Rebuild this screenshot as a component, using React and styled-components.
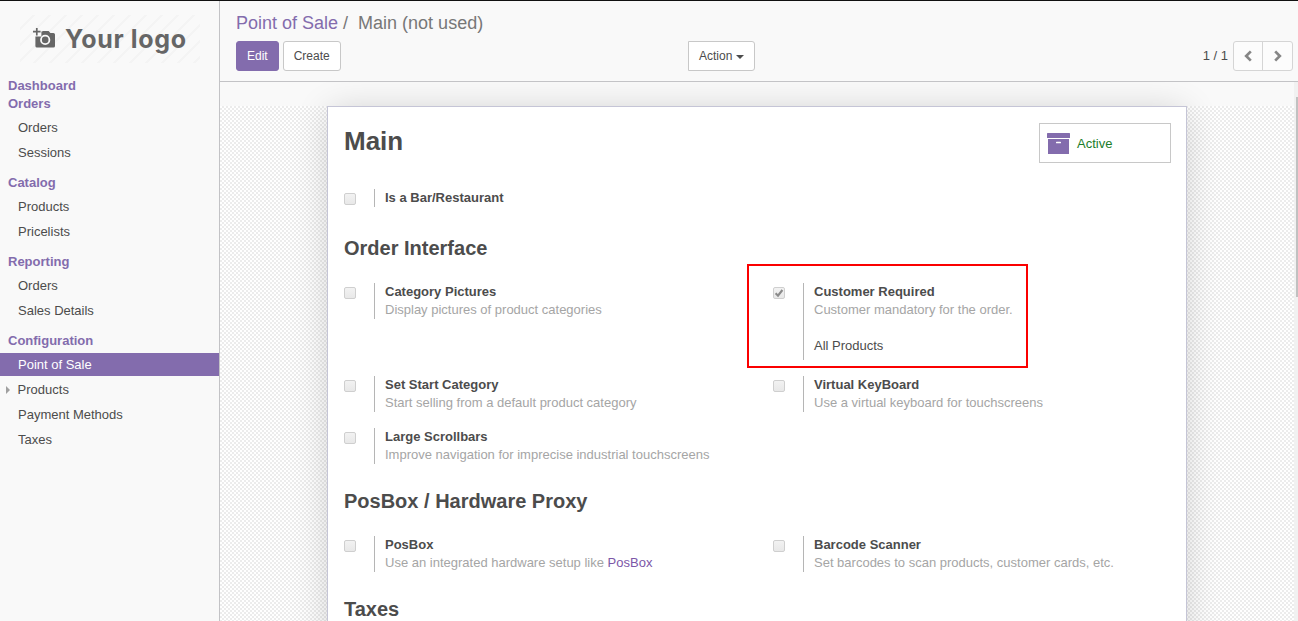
import React from "react";
import styled, { createGlobalStyle, css } from "styled-components";

const purple = "#836cad";

const GlobalStyle = createGlobalStyle`
  *, *::before, *::after { box-sizing: border-box; }
  html, body { margin: 0; height: 100%; overflow: hidden; }
  body {
    font: 13px/18px "Liberation Sans", Arial, sans-serif;
    color: #4c4c4c;
    background: #f9f9f9;
  }
`;

const Page = styled.div`
  display: flex;
  width: 100vw;
  height: 100vh;
  border-top: 1px solid #111;
  background: #f9f9f9;
  overflow: hidden;
`;

const Sidebar = styled.aside`
  flex: 0 0 220px;
  border-right: 1px solid #c3c3c6;
`;

const Logo = styled.div`
  display: flex;
  align-items: center;
  width: 180px;
  height: 48px;
  margin: 14px 0 14px 20px;
  padding: 0 0 2px 13px;
  color: #666;
  background: repeating-linear-gradient(135deg, #f9f9f9 0 9px, #f4f4f4 9px 11.3px);
`;

const LogoText = styled.span`
  margin-left: 10px;
  padding-top: 2px;
  font: 700 25px/46px Inter, sans-serif;
  letter-spacing: 0.65px;
  white-space: nowrap;
`;

const Section = styled.section`
  margin-bottom: ${(p) => (p.$flat ? 0 : 10)}px;
`;

const SectionTitle = styled.div`
  padding-left: 8px;
  font-weight: bold;
  color: ${purple};
`;

const MenuList = styled.ul`
  display: flex;
  flex-direction: column;
  gap: 2px;
  margin: 3px 0 0;
  padding: 0;
  list-style: none;
`;

const MenuItem = styled.li`
  display: flex;
  align-items: center;
  height: 23px;
  padding-left: ${(p) => (p.$parent ? 6 : 18)}px;
  ${(p) =>
    p.$active &&
    css`
      color: #fff;
      background: ${purple};
    `}
`;

const Expander = styled.span`
  margin-right: 7.6px;
  border: 4px solid transparent;
  border-left: 4px solid #a0a0a0;
  border-right: 0;
`;

const Main = styled.main`
  flex: 1;
  min-width: 0;
  display: flex;
  flex-direction: column;
`;

const ControlPanel = styled.header`
  flex: 0 0 81px;
  padding: 10px 5px 0 16px;
  border-bottom: 1px solid #c3c3c6;
`;

const Breadcrumb = styled.div`
  height: 30px;
  font-size: 18px;
  line-height: 24px;
  color: #777;
  white-space: pre;
`;

const Crumb = styled.span`
  color: ${purple};
`;

const Toolbar = styled.div`
  display: flex;
  align-items: center;
`;

const ToolbarLeft = styled.div`
  display: flex;
  gap: 4px;
  width: 452px;
`;

const Button = styled.button`
  display: inline-flex;
  align-items: center;
  justify-content: center;
  height: 30px;
  padding: 0 10px;
  border: 1px solid ${(p) => (p.$primary ? purple : "#c8c8c8")};
  border-radius: ${(p) => (p.$squareLeft ? "0 3px 3px 0" : "3px")};
  font: 12px/18px "Liberation Sans", Arial, sans-serif;
  color: ${(p) => (p.$primary ? "#fff" : "#4c4c4c")};
  background: ${(p) => (p.$primary ? purple : "#fff")};
`;

const Caret = styled.span`
  margin: 1px 0 0 3.7px;
  border: 4px solid transparent;
  border-top-color: #4c4c4c;
  border-bottom: 0;
`;

const Pager = styled.div`
  display: flex;
  align-items: center;
  margin-left: auto;
`;

const PagerButtons = styled.div`
  display: flex;
  width: 60px;
  height: 30px;
  margin-left: 5px;
  border: 1px solid #d5d5d5;
  border-radius: 3px;
  background: #fcfcfc;
`;

const PagerButton = styled.button`
  display: flex;
  align-items: center;
  justify-content: center;
  width: 28px;
  padding: 0;
  border: 0;
  background: none;
  & + & {
    width: 30px;
    border-left: 1px solid #d5d5d5;
  }
`;

const Content = styled.div`
  flex: 1;
  min-height: 0;
  display: flex;
`;

const FormView = styled.div`
  flex: 1;
  padding-top: 24px;
  overflow: hidden;
`;

const SheetBackground = styled.div`
  height: 100%;
  padding-left: 107px;
  background: repeating-conic-gradient(#ececec 0 25%, #fff 0 50%) 0 0 / 4px 4px;
`;

const Sheet = styled.div`
  width: 860px;
  height: 700px;
  padding: 16px 15px 0 16px;
  border: 1px solid #c5c5d6;
  background: #fff;
  box-shadow: 0 3px 34px -3px rgba(0, 0, 0, 0.19);
`;

const ScrollTrack = styled.div`
  width: 4px;
  padding: 15px 0 0 2px;
  background: #f1f1f1;
`;

const ScrollThumb = styled.div`
  height: 200px;
  background: #c1c1c1;
`;

const SheetHeader = styled.div`
  display: flex;
  justify-content: space-between;
  height: 66px;
`;

const Title = styled.h1`
  margin: 3px 0 0;
  font-size: 26px;
  line-height: 30px;
`;

const StatButton = styled.div`
  display: flex;
  align-items: center;
  gap: 7px;
  width: 132px;
  height: 40px;
  padding: 2px 0 0 7px;
  border: 1px solid #c8c8c8;
  color: #1b7d2b;
`;

const GroupTitle = styled.h2`
  margin: ${(p) => p.$top}px 0 23px;
  font-size: 20px;
  line-height: 24px;
`;

const Grid = styled.div`
  display: grid;
  grid-template-columns: 429px 1fr;
  row-gap: 16px;
`;

const SettingBox = styled.div`
  position: relative;
  display: flex;
  align-items: ${(p) => (p.$highlight ? "stretch" : "flex-start")};
  ${(p) =>
    p.$highlight &&
    css`
      height: 77px;
      &::after {
        content: "";
        position: absolute;
        left: -26px;
        top: -19px;
        width: 281px;
        height: 104px;
        border: 2px solid #fb0000;
      }
    `}
`;

const Checkbox = styled.span`
  display: flex;
  align-items: center;
  justify-content: center;
  width: 12px;
  height: 12px;
  margin: 4px 18px 0 0;
  border: 1px solid #cfcfcf;
  border-radius: 2px;
  background: linear-gradient(#f2f2f2, #e8e8e8);
`;

const SettingBody = styled.div`
  padding-left: 10px;
  border-left: 1px solid #b5b5b5;
`;

const Label = styled.div`
  font-weight: bold;
`;

const Description = styled.div`
  color: #a5a5a5;
`;

const Value = styled.div`
  margin-top: 18px;
`;

const Link = styled.span`
  color: #7c57a8;
`;

const CameraIcon = () => (
  <svg width="22" height="20" viewBox="0 0 22 20" fill="none">
    <path fill="#666" d="M5.2 8.4H8.4V3.6H9.2L9.8 3H15.6L17.4 4.9H20.4Q22 4.9 22 6.5V18Q22 19.6 20.4 19.6H4Q2.4 19.6 2.4 18V8.4Z" />
    <path stroke="#666" strokeWidth="1.7" d="M3.8 0V7.4M0 3.7H7.6" />
    <circle cx="12.2" cy="11.9" r="4.2" stroke="#f9f9f9" strokeWidth="1.8" />
  </svg>
);

const ArchiveIcon = () => (
  <svg width="23" height="22" viewBox="0 0 23 22" fill={purple}>
    <rect width="23" height="5" rx="0.5" />
    <path d="M1 6H22V21H1Z" />
    <rect x="9" y="8.7" width="5" height="1.6" rx="0.6" fill="#fff" />
  </svg>
);

const CheckIcon = () => (
  <svg width="10" height="10" viewBox="0 0 10 10" fill="none">
    <path d="M1.6 5.3L4 7.7L8.4 2" stroke="#8a8a8a" strokeWidth="2.1" />
  </svg>
);

const Chevron = ({ right }) => (
  <svg width="8" height="12" viewBox="0 0 8 12" fill="none" stroke="#868686" strokeWidth="2.7">
    <path d={right ? "M1.2 1.4L5.8 6L1.2 10.6" : "M6.8 1.4L2.2 6L6.8 10.6"} />
  </svg>
);

const Setting = ({ label, text, value, checked, highlight }) => (
  <SettingBox $highlight={highlight}>
    <Checkbox>{checked && <CheckIcon />}</Checkbox>
    <SettingBody>
      <Label>{label}</Label>
      {text && <Description>{text}</Description>}
      {value && <Value>{value}</Value>}
    </SettingBody>
  </SettingBox>
);

const menu = [
  { title: "Dashboard", items: [] },
  { title: "Orders", items: ["Orders", "Sessions"] },
  { title: "Catalog", items: ["Products", "Pricelists"] },
  { title: "Reporting", items: ["Orders", "Sales Details"] },
  {
    title: "Configuration",
    items: ["Point of Sale", "Products", "Payment Methods", "Taxes"],
    active: "Point of Sale",
    parent: "Products",
  },
];

export default function App() {
  return (
    <Page>
      <GlobalStyle />
      <Sidebar>
        <Logo>
          <CameraIcon />
          <LogoText>Your logo</LogoText>
        </Logo>
        {menu.map((s) => (
          <Section key={s.title} $flat={!s.items.length}>
            <SectionTitle>{s.title}</SectionTitle>
            {s.items.length > 0 && (
              <MenuList>
                {s.items.map((item) => (
                  <MenuItem key={item} $active={item === s.active} $parent={item === s.parent}>
                    {item === s.parent && <Expander />}
                    {item}
                  </MenuItem>
                ))}
              </MenuList>
            )}
          </Section>
        ))}
      </Sidebar>
      <Main>
        <ControlPanel>
          <Breadcrumb>
            <Crumb>Point of Sale</Crumb>
            {" /  Main (not used)"}
          </Breadcrumb>
          <Toolbar>
            <ToolbarLeft>
              <Button $primary>Edit</Button>
              <Button>Create</Button>
            </ToolbarLeft>
            <Button $squareLeft>
              Action
              <Caret />
            </Button>
            <Pager>
              1 / 1
              <PagerButtons>
                <PagerButton><Chevron /></PagerButton>
                <PagerButton><Chevron right /></PagerButton>
              </PagerButtons>
            </Pager>
          </Toolbar>
        </ControlPanel>
        <Content>
          <FormView>
            <SheetBackground>
              <Sheet>
                <SheetHeader>
                  <Title>Main</Title>
                  <StatButton>
                    <ArchiveIcon />
                    Active
                  </StatButton>
                </SheetHeader>
                <Grid>
                  <Setting label="Is a Bar/Restaurant" />
                </Grid>
                <GroupTitle $top={29}>Order Interface</GroupTitle>
                <Grid>
                  <Setting label="Category Pictures" text="Display pictures of product categories" />
                  <Setting
                    label="Customer Required"
                    text="Customer mandatory for the order."
                    value="All Products"
                    checked
                    highlight
                  />
                  <Setting label="Set Start Category" text="Start selling from a default product category" />
                  <Setting label="Virtual KeyBoard" text="Use a virtual keyboard for touchscreens" />
                  <Setting label="Large Scrollbars" text="Improve navigation for imprecise industrial touchscreens" />
                </Grid>
                <GroupTitle $top={25}>PosBox / Hardware Proxy</GroupTitle>
                <Grid>
                  <Setting
                    label="PosBox"
                    text={<>Use an integrated hardware setup like <Link>PosBox</Link></>}
                  />
                  <Setting label="Barcode Scanner" text="Set barcodes to scan products, customer cards, etc." />
                </Grid>
                <GroupTitle $top={25}>Taxes</GroupTitle>
              </Sheet>
            </SheetBackground>
          </FormView>
          <ScrollTrack>
            <ScrollThumb />
          </ScrollTrack>
        </Content>
      </Main>
    </Page>
  );
}
